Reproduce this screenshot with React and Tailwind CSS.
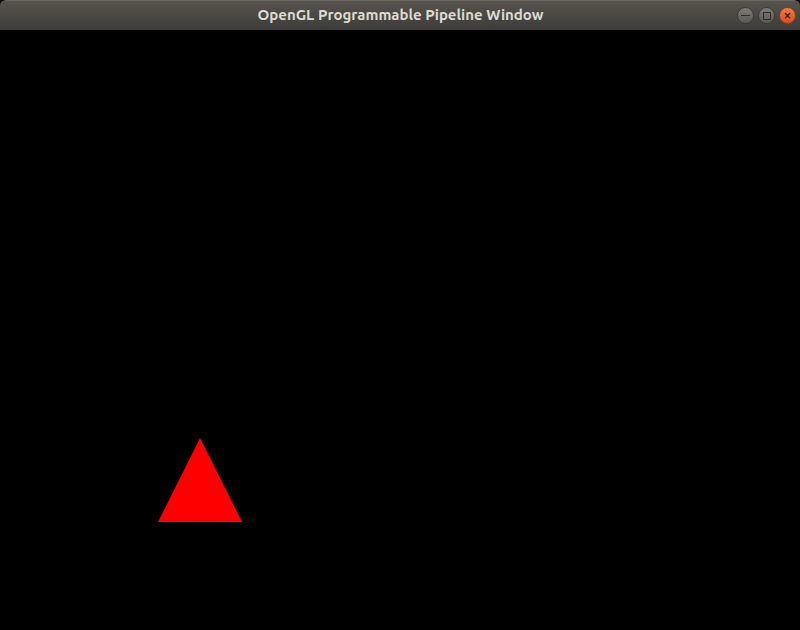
export default function App() {
  return (
    <div className="w-[800px] h-[630px] bg-black flex flex-col">
      <header className="h-[30px] shrink-0 rounded-t-[6px] bg-gradient-to-b from-[#57544e] to-[#3d3c38] border-t border-[#6a6760] flex items-center relative">
        <div className="flex-1 text-center text-[15px] font-bold text-[#dfdbd2] font-['Ubuntu','Open_Sans','DejaVu_Sans',sans-serif] pl-[1px]">
          OpenGL Programmable Pipeline Window
        </div>
        <div className="absolute right-[4px] top-[6px] flex gap-[4px]">
          <span className="w-[17px] h-[17px] rounded-full bg-gradient-to-b from-[#7d7b76] to-[#5c5a55] border border-[#3a3935] flex items-center justify-center">
            <span className="w-[9px] h-[1px] bg-[#2f2e2b]" />
          </span>
          <span className="w-[17px] h-[17px] rounded-full bg-gradient-to-b from-[#7d7b76] to-[#5c5a55] border border-[#3a3935] flex items-center justify-center">
            <span className="w-[8px] h-[8px] border border-[#2f2e2b]" />
          </span>
          <span className="w-[17px] h-[17px] rounded-full bg-gradient-to-b from-[#f07a4a] to-[#df4b17] border border-[#8a3b1d] flex items-center justify-center text-[#3a1a0a] text-[10px] leading-none font-bold font-['DejaVu_Sans',sans-serif]">
            ×
          </span>
        </div>
      </header>
      <svg width="800" height="600" viewBox="0 0 800 600" className="block">
        <rect width="800" height="600" fill="#000" />
        <polygon points="200,408 158,492 242,492" fill="#ff0000" />
      </svg>
    </div>
  );
}
